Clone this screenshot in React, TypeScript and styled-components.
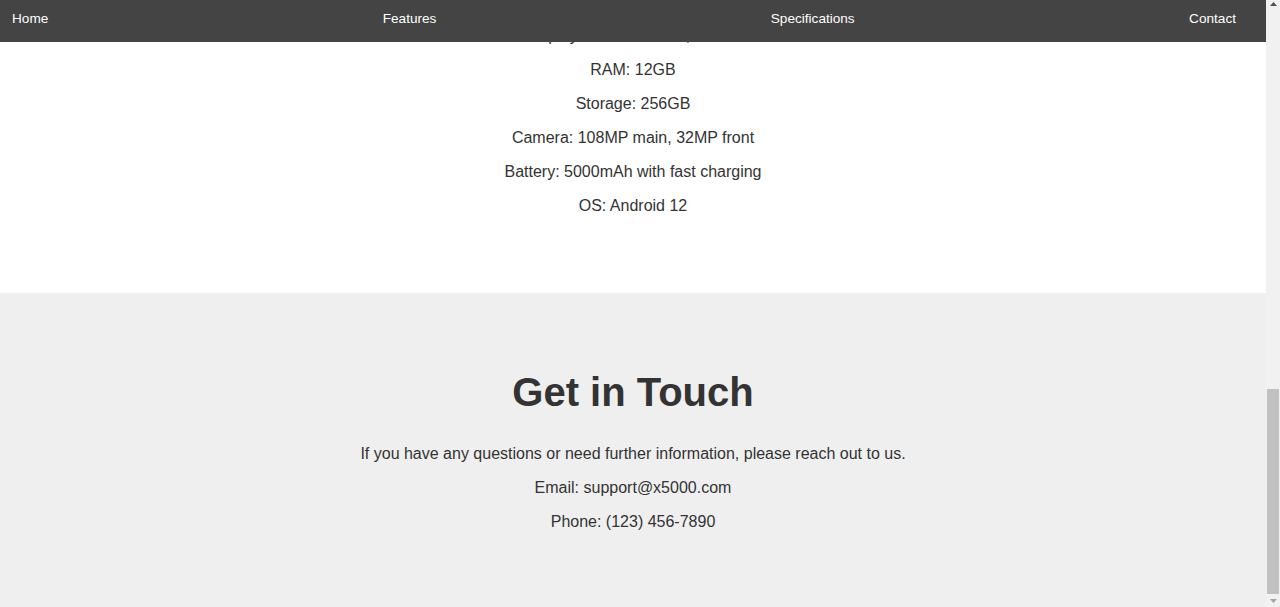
import React from "react";
import styled, { createGlobalStyle } from "styled-components";

const GlobalStyle = createGlobalStyle`
  html, body {
    margin: 0;
    padding: 0;
    height: 100%;
    overflow: hidden;
    background: #ffffff;
  }
  body {
    font-family: "Liberation Sans", Arial, sans-serif;
    color: #333333;
  }
  #root {
    height: 100%;
  }
`;

const Window = styled.div`
  display: flex;
  flex-direction: row;
  height: 607px;
  width: 1280px;
  overflow: hidden;
`;

const Viewport = styled.div`
  position: relative;
  flex: 1;
  min-width: 0;
  display: flex;
  flex-direction: column;
  overflow: hidden;
`;

const NavBar = styled.nav`
  position: absolute;
  top: 0;
  left: 0;
  right: 0;
  z-index: 10;
  height: 42px;
  box-sizing: border-box;
  background: #444444;
  display: flex;
  align-items: center;
  justify-content: space-between;
  padding: 0 30px 0 12px;
`;

const NavLink = styled.a`
  color: #ffffff;
  text-decoration: none;
  font-size: 13.6px;
  line-height: 16px;
  margin-top: -5px;
`;

const SpecsSection = styled.section`
  background: #ffffff;
  text-align: center;
  padding: 11px 20px 62px;
`;

const SpecLine = styled.p`
  margin: 16px 0;
  font-size: 16px;
  line-height: 18px;
  color: #333333;
`;

const ContactSection = styled.section`
  flex: 1;
  background: #efefef;
  text-align: center;
  padding: 76px 20px 0;
`;

const Heading = styled.h2`
  margin: 0;
  font-size: 40px;
  line-height: 46px;
  font-weight: 700;
  color: #333333;
`;

const ContactLine = styled.p<{ $first?: boolean }>`
  margin: ${(p) => (p.$first ? "30px" : "16px")} 0 0;
  font-size: 16px;
  line-height: 18px;
  color: #333333;
`;

const Scrollbar = styled.div`
  width: 14px;
  flex: 0 0 14px;
  background: #f1f1f1;
  display: flex;
  flex-direction: column;
`;

const ScrollButton = styled.div<{ $h: number }>`
  height: ${(p) => p.$h}px;
  flex: 0 0 ${(p) => p.$h}px;
  display: flex;
  align-items: center;
  justify-content: center;
`;

const Track = styled.div`
  flex: 1;
  display: flex;
  flex-direction: column;
  justify-content: flex-end;
  padding: 0 1px 1px;
`;

const Thumb = styled.div`
  height: 205px;
  background: #c1c1c1;
`;

const specs = [
  'Display: 6.8" AMOLED, 120Hz',
  "RAM: 12GB",
  "Storage: 256GB",
  "Camera: 108MP main, 32MP front",
  "Battery: 5000mAh with fast charging",
  "OS: Android 12",
];

export default function App() {
  return (
    <>
      <GlobalStyle />
      <Window>
        <Viewport>
          <NavBar>
            <NavLink href="#home">Home</NavLink>
            <NavLink href="#features">Features</NavLink>
            <NavLink href="#specifications">Specifications</NavLink>
            <NavLink href="#contact">Contact</NavLink>
          </NavBar>
          <SpecsSection id="specifications">
            {specs.map((s) => (
              <SpecLine key={s}>{s}</SpecLine>
            ))}
          </SpecsSection>
          <ContactSection id="contact">
            <Heading>Get in Touch</Heading>
            <ContactLine $first>
              If you have any questions or need further information, please reach out to us.
            </ContactLine>
            <ContactLine>Email: support@x5000.com</ContactLine>
            <ContactLine>Phone: (123) 456-7890</ContactLine>
          </ContactSection>
        </Viewport>
        <Scrollbar>
          <ScrollButton $h={7}>
            <svg width="7" height="4" viewBox="0 0 7 4">
              <polygon points="3.5,0 7,4 0,4" fill="#505050" />
            </svg>
          </ScrollButton>
          <Track>
            <Thumb />
          </Track>
          <ScrollButton $h={12}>
            <svg width="7" height="4" viewBox="0 0 7 4">
              <polygon points="0,0 7,0 3.5,4" fill="#a3a3a3" />
            </svg>
          </ScrollButton>
        </Scrollbar>
      </Window>
    </>
  );
}
